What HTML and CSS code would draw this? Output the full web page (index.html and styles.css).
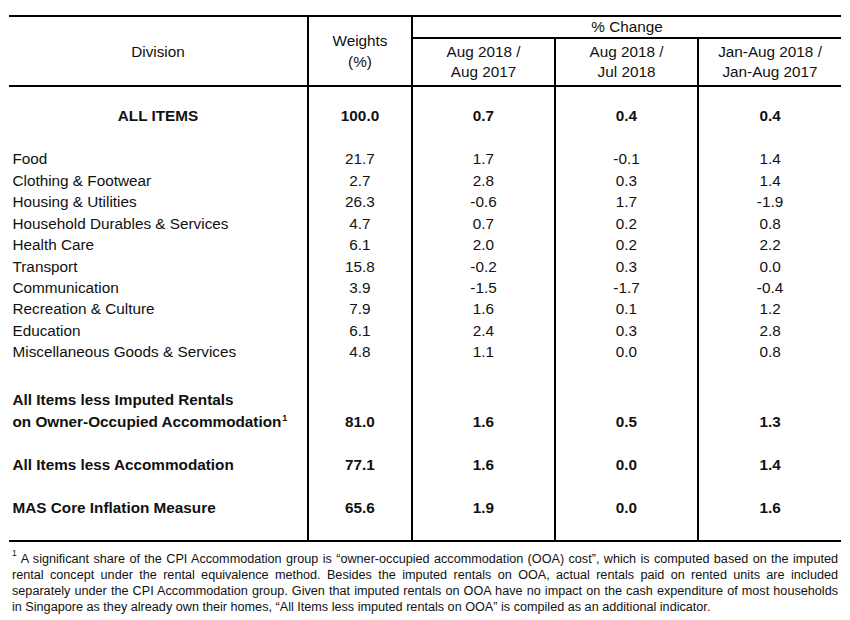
FILE: index.html
```html
<!DOCTYPE html>
<html lang="en">
<head>
<meta charset="utf-8">
<title>CPI by Division</title>
<link rel="stylesheet" href="styles.css">
</head>
<body>
<div class="page">
  <table class="cpi">
    <colgroup>
      <col class="c-div">
      <col class="c-w">
      <col class="c-p">
      <col class="c-p">
      <col class="c-last">
    </colgroup>
    <thead>
      <tr>
        <th rowspan="2" class="h-div">Division</th>
        <th rowspan="2" class="h-w vl">Weights<br>(%)</th>
        <th colspan="3" class="h-pc vl">% Change</th>
      </tr>
      <tr>
        <th class="h-sub vl">Aug 2018 /<br>Aug 2017</th>
        <th class="h-sub vl">Aug 2018 /<br>Jul 2018</th>
        <th class="h-sub vl">Jan-Aug 2018 /<br>Jan-Aug 2017</th>
      </tr>
    </thead>
    <tbody>
      <tr class="all">
        <td class="center">ALL ITEMS</td><td class="vl">100.0</td><td class="vl">0.7</td><td class="vl">0.4</td><td class="vl">0.4</td>
      </tr>
      <tr class="item"><td class="name">Food</td><td class="vl">21.7</td><td class="vl">1.7</td><td class="vl">-0.1</td><td class="vl">1.4</td></tr>
      <tr class="item"><td class="name">Clothing &amp; Footwear</td><td class="vl">2.7</td><td class="vl">2.8</td><td class="vl">0.3</td><td class="vl">1.4</td></tr>
      <tr class="item"><td class="name">Housing &amp; Utilities</td><td class="vl">26.3</td><td class="vl">-0.6</td><td class="vl">1.7</td><td class="vl">-1.9</td></tr>
      <tr class="item"><td class="name">Household Durables &amp; Services</td><td class="vl">4.7</td><td class="vl">0.7</td><td class="vl">0.2</td><td class="vl">0.8</td></tr>
      <tr class="item"><td class="name">Health Care</td><td class="vl">6.1</td><td class="vl">2.0</td><td class="vl">0.2</td><td class="vl">2.2</td></tr>
      <tr class="item"><td class="name">Transport</td><td class="vl">15.8</td><td class="vl">-0.2</td><td class="vl">0.3</td><td class="vl">0.0</td></tr>
      <tr class="item"><td class="name">Communication</td><td class="vl">3.9</td><td class="vl">-1.5</td><td class="vl">-1.7</td><td class="vl">-0.4</td></tr>
      <tr class="item"><td class="name">Recreation &amp; Culture</td><td class="vl">7.9</td><td class="vl">1.6</td><td class="vl">0.1</td><td class="vl">1.2</td></tr>
      <tr class="item"><td class="name">Education</td><td class="vl">6.1</td><td class="vl">2.4</td><td class="vl">0.3</td><td class="vl">2.8</td></tr>
      <tr class="item"><td class="name">Miscellaneous Goods &amp; Services</td><td class="vl">4.8</td><td class="vl">1.1</td><td class="vl">0.0</td><td class="vl">0.8</td></tr>
      <tr class="agg first">
        <td class="name">All Items less Imputed Rentals<br>on Owner-Occupied Accommodation<sup class="fn">1</sup></td>
        <td class="vl">81.0</td><td class="vl">1.6</td><td class="vl">0.5</td><td class="vl">1.3</td>
      </tr>
      <tr class="agg">
        <td class="name">All Items less Accommodation</td>
        <td class="vl">77.1</td><td class="vl">1.6</td><td class="vl">0.0</td><td class="vl">1.4</td>
      </tr>
      <tr class="agg end">
        <td class="name">MAS Core Inflation Measure</td>
        <td class="vl">65.6</td><td class="vl">1.9</td><td class="vl">0.0</td><td class="vl">1.6</td>
      </tr>
    </tbody>
  </table>
  <p class="note"><sup class="note-ref">1</sup>A significant share of the CPI Accommodation group is “owner-occupied accommodation (OOA) cost”, which is computed based on the imputed rental concept under the rental equivalence method. Besides the imputed rentals on OOA, actual rentals paid on rented units are included separately under the CPI Accommodation group. Given that imputed rentals on OOA have no impact on the cash expenditure of most households in Singapore as they already own their homes, “All Items less imputed rentals on OOA” is compiled as an additional indicator.</p>
</div>
</body>
</html>
```

FILE: styles.css
```css
html, body {
  margin: 0;
  background: #ffffff;
}

body {
  color: #111111;
  font-family: "Liberation Sans", Arial, sans-serif;
}

.page {
  padding: 15px 0 0 9px;
}

.cpi {
  border-collapse: separate;
  border-spacing: 0;
  table-layout: fixed;
  width: 832px;
  border-top: 2px solid #000;
  border-bottom: 2px solid #000;
  font-size: 15.3px;
}

.c-div { width: 298px; }
.c-w { width: 104px; }
.c-p { width: 143px; }
.c-last { width: 144px; }

.cpi th {
  font-weight: normal;
  text-align: center;
  padding: 0;
}

.vl {
  border-left: 2px solid #000;
}

.h-div,
.h-w {
  vertical-align: middle;
  border-bottom: 2px solid #000;
  line-height: 21px;
}

.h-pc {
  line-height: 20px;
  height: 20px;
  border-bottom: 2px solid #000;
}

.h-sub {
  line-height: 20px;
  padding: 3px 0 !important;
  border-bottom: 2px solid #000;
}

.cpi td {
  padding: 0 3.5px;
  line-height: 21.45px;
  text-align: center;
  white-space: nowrap;
}

.cpi td.name {
  text-align: left;
}

.all td {
  font-weight: bold;
  line-height: 21.5px;
  padding-top: 18.25px;
  padding-bottom: 21.5px;
}

.agg td {
  font-weight: bold;
  line-height: 21.5px;
  padding-top: 21.5px;
  vertical-align: bottom;
}

.agg.first td {
  padding-top: 26.5px;
}

.agg.end td {
  padding-bottom: 21.25px;
}

.fn {
  font-size: 9px;
  line-height: 0;
  vertical-align: 6px;
  margin-left: 1px;
}

.note {
  margin: 7px 0 0 3px;
  width: 826px;
  font-size: 12.65px;
  line-height: 16.3px;
  text-align: justify;
}

.note-ref {
  display: inline-block;
  font-size: 8.5px;
  line-height: 8px;
  vertical-align: 7px;
  margin-right: 4px;
}
```
